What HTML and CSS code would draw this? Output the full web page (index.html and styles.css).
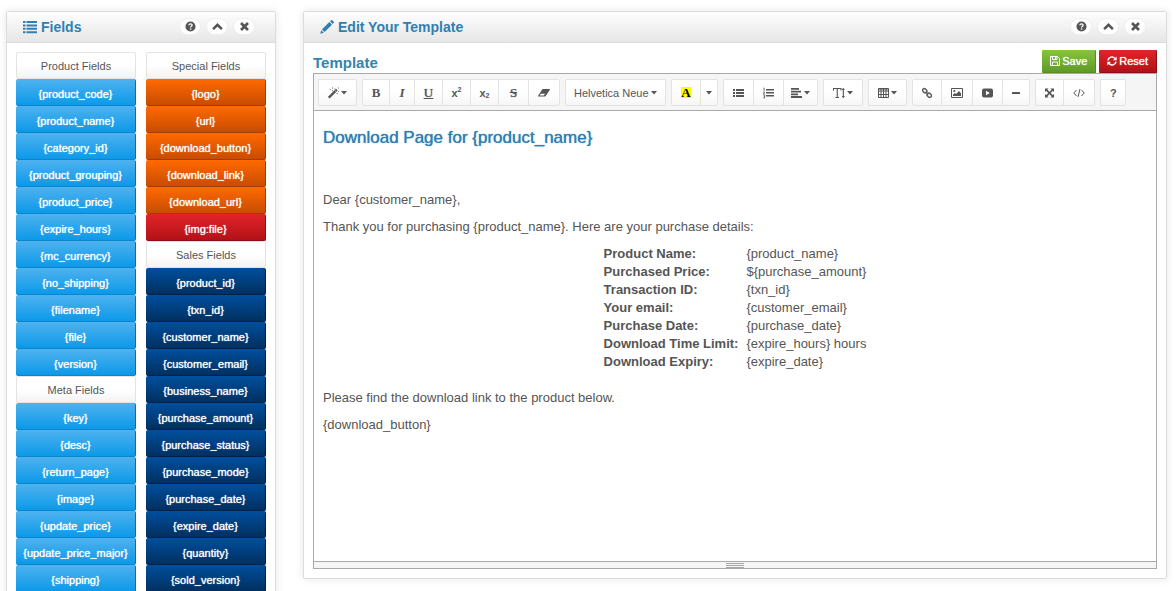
FILE: index.html
```html
<!DOCTYPE html>
<html lang="en">
<head>
<meta charset="utf-8">
<title>Edit Your Template</title>
<link rel="stylesheet" href="styles.css">
</head>
<body>
<svg class="sprite" aria-hidden="true">
  <symbol id="help" viewBox="0 0 12 12"><circle cx="6" cy="6" r="5.5" fill="currentColor"/><path d="M4.2 4.7C4.2 2.5 7.9 2.6 7.8 4.6C7.7 5.7 6.1 5.7 6.1 7" fill="none" stroke="#fff" stroke-width="1.4"/><rect x="5.3" y="8" width="1.6" height="1.5" fill="#fff"/></symbol>
  <symbol id="up" viewBox="0 0 12 12"><path d="M1.2 8.8L6 4.2l4.800 4.600" fill="none" stroke="currentColor" stroke-width="2.800"/></symbol>
  <symbol id="close" viewBox="0 0 12 12"><path d="M2.2 2.2l7.6 7.6M9.8 2.2L2.2 9.8" stroke="currentColor" stroke-width="3"/></symbol>
  <symbol id="caret" viewBox="0 0 6 4"><path d="M0 0h6L3 3.5z" fill="currentColor"/></symbol>
</svg>
<div class="page">
  <aside class="panel">
    <header class="panel-head">
      <svg class="head-icon" viewBox="0 0 14 14"><path d="M0 1h2.5v2H0zM3.500 1H14v2H3.500zM0 4.400h2.500v2H0zM3.500 4.400H14v2H3.500zM0 7.800h2.500v2H0zM3.500 7.800H14v2H3.500zM0 11.200h2.500v2H0zM3.500 11.200H14v2H3.500z" fill="currentColor"/></svg>
      <h2>Fields</h2>
      <div class="head-tools">
        <button aria-label="Help"><svg><use href="#help"/></svg></button>
        <button aria-label="Collapse"><svg><use href="#up"/></svg></button>
        <button aria-label="Close"><svg><use href="#close"/></svg></button>
      </div>
    </header>
    <div class="fields">
      <div class="field-col">
        <h3>Product Fields</h3>
        <button class="blue">{product_code}</button>
        <button class="blue">{product_name}</button>
        <button class="blue">{category_id}</button>
        <button class="blue">{product_grouping}</button>
        <button class="blue">{product_price}</button>
        <button class="blue">{expire_hours}</button>
        <button class="blue">{mc_currency}</button>
        <button class="blue">{no_shipping}</button>
        <button class="blue">{filename}</button>
        <button class="blue">{file}</button>
        <button class="blue">{version}</button>
        <h3>Meta Fields</h3>
        <button class="blue">{key}</button>
        <button class="blue">{desc}</button>
        <button class="blue">{return_page}</button>
        <button class="blue">{image}</button>
        <button class="blue">{update_price}</button>
        <button class="blue">{update_price_major}</button>
        <button class="blue">{shipping}</button>
      </div>
      <div class="field-col">
        <h3>Special Fields</h3>
        <button class="orange">{logo}</button>
        <button class="orange">{url}</button>
        <button class="orange">{download_button}</button>
        <button class="orange">{download_link}</button>
        <button class="orange">{download_url}</button>
        <button class="red">{img:file}</button>
        <h3>Sales Fields</h3>
        <button class="navy">{product_id}</button>
        <button class="navy">{txn_id}</button>
        <button class="navy">{customer_name}</button>
        <button class="navy">{customer_email}</button>
        <button class="navy">{business_name}</button>
        <button class="navy">{purchase_amount}</button>
        <button class="navy">{purchase_status}</button>
        <button class="navy">{purchase_mode}</button>
        <button class="navy">{purchase_date}</button>
        <button class="navy">{expire_date}</button>
        <button class="navy">{quantity}</button>
        <button class="navy">{sold_version}</button>
      </div>
    </div>
  </aside>

  <main class="panel editor-panel">
    <header class="panel-head">
      <svg class="head-icon" viewBox="0 0 14 14"><path d="M0.300 13.700L1.200 10.200L3.800 12.800zM1.900 9.400L9.300 2L12 4.700L4.600 12.100zM10 1.300L11.200 0.200Q11.800-0.200 12.300 0.300L13.700 1.700Q14.200 2.300 13.700 2.800L12.700 4z" fill="currentColor"/></svg>
      <h2>Edit Your Template</h2>
      <div class="head-tools">
        <button aria-label="Help"><svg><use href="#help"/></svg></button>
        <button aria-label="Collapse"><svg><use href="#up"/></svg></button>
        <button aria-label="Close"><svg><use href="#close"/></svg></button>
      </div>
    </header>
    <div class="editor-wrap">
      <div class="title-row">
        <h2>Template</h2>
        <button class="action green"><svg viewBox="0 0 10 10"><path d="M.5.5h7l2 2v7h-9zM2.500.500v3h4.500v-3M2.500 9.500v-3.500h5v3.500M5.500 1v2" fill="none" stroke="currentColor"/></svg>Save</button>
        <button class="action red"><svg viewBox="0 0 10 10"><path d="M.9 4.300A4.100 4.100 0 0 1 8 2.400M9.100 5.700A4.100 4.100 0 0 1 2 7.600" fill="none" stroke="currentColor" stroke-width="1.500"/><path d="M9.700.500v3.700H6zM.3 9.500V5.800H4z" fill="currentColor"/></svg>Reset</button>
      </div>
      <div class="editor">
        <div class="toolbar" role="toolbar" aria-label="Formatting">
          <div class="group">
            <button aria-label="Style"><svg class="i11" viewBox="0 0 12 12"><path d="M.8 11.200L8 4" stroke="currentColor" stroke-width="2.600"/><path d="M8.200 3.800L9.700 2.300" stroke="currentColor" stroke-width="2.600"/><path d="M2 1.500h1v1H2zM4.500 0h1v1h-1zM4.500 3h1v1h-1zM7 1.200h1v1H7zM11 4h1v1h-1zM9.500 6h1v1h-1zM10.800 0h1v1h-1z" fill="currentColor"/></svg><svg class="caret"><use href="#caret"/></svg></button>
          </div>
          <div class="group">
            <button aria-label="Bold"><b class="glyph w8">B</b></button>
            <button aria-label="Italic"><i class="glyph w6">I</i></button>
            <button aria-label="Underline"><u class="glyph w9">U</u></button>
            <button aria-label="Superscript"><span class="script w9">x<sup>2</sup></span></button>
            <button aria-label="Subscript"><span class="script w9">x<sub>2</sub></span></button>
            <button aria-label="Strikethrough"><s class="glyph strike w11">S</s></button>
            <button aria-label="Clear formatting"><svg class="i12" viewBox="0 0 12 12"><path d="M4.500 2H11.500Q12.200 2.200 11.700 3L7.700 9Q7.300 9.500 6.800 9.500H.5Q-.2 9.200.3 8.500z" fill="currentColor"/><path d="M1.600 8.400L2.800 6.700H7L5.900 8.400z" fill="#fff"/></svg></button>
          </div>
          <div class="group font-picker">
            <select aria-label="Font family"><option>Helvetica Neue</option><option>Arial</option><option>Georgia</option></select>
            <svg class="caret"><use href="#caret"/></svg>
          </div>
          <div class="group">
            <button aria-label="Highlight"><b class="glyph mark w10">A</b></button>
            <button class="slim" aria-label="More colours"><svg class="caret"><use href="#caret"/></svg></button>
          </div>
          <div class="group">
            <button aria-label="Bulleted list"><svg class="i11" viewBox="0 0 11 12"><path d="M0 2h2v2H0zM3 2h8v2H3zM0 5h2v2H0zM3 5h8v2H3zM0 8h2v2H0zM3 8h8v2H3z" fill="currentColor"/></svg></button>
            <button aria-label="Numbered list"><svg class="i11" viewBox="0 0 11 12"><path d="M3 2h8v1.500H3zM3 5h8v1.500H3zM3 8h8v1.500H3z" fill="currentColor"/><path d="M.3 1h.8v3M.2 5h1.400L.3 7h1.500M.2 8h1.400v3H.2M.8 9.500h.8" fill="none" stroke="currentColor" stroke-width=".8"/></svg></button>
            <button class="snug" aria-label="Paragraph"><svg class="i11" viewBox="0 0 11 12"><path d="M0 1h8v1.800H0zM0 3.700h10v1.800H0zM0 6.400h7v1.800H0zM0 9.100h11v1.800H0z" fill="currentColor"/></svg><svg class="caret"><use href="#caret"/></svg></button>
          </div>
          <div class="group">
            <button aria-label="Line height"><svg class="i12" viewBox="0 0 12 12"><path d="M.5 3.500V1.500H8V3.500M4.250 1.500V10.500M2.500 10.500H6M10.300 2.500V9.500" fill="none" stroke="currentColor" stroke-width="1.100"/><path d="M8.700 3L10.300.800L11.900 3zM8.700 9L10.300 11.200L11.900 9z" fill="currentColor"/></svg><svg class="caret"><use href="#caret"/></svg></button>
          </div>
          <div class="group">
            <button aria-label="Table"><svg class="i11" viewBox="0 0 11 12"><path d="M.5 1.500h10v9H.5zM.5 4h10M.5 7.500h10M3 2v9M5.500 2v9M8 2v9M.5 2h10" fill="none" stroke="currentColor"/></svg><svg class="caret"><use href="#caret"/></svg></button>
          </div>
          <div class="group">
            <button aria-label="Link"><svg class="i10" viewBox="0 0 10 12"><g fill="none" stroke="currentColor" stroke-width="1.400"><rect x="-2.300" y="-1.700" width="4.600" height="3.400" rx="1.500" transform="translate(2.700 3.700) rotate(45)"/><rect x="-2.300" y="-1.700" width="4.600" height="3.400" rx="1.500" transform="translate(7.300 8.300) rotate(45)"/><path d="M3.700 4.700L6.300 7.300"/></g></svg></button>
            <button aria-label="Picture"><svg class="i12" viewBox="0 0 12 12"><path d="M.5 1.500h11v9H.5z" fill="none" stroke="currentColor"/><circle cx="3.300" cy="4" r="1.100" fill="currentColor"/><path d="M2 9V7.500L3.800 6L5 7L8 4L10 6.200V9z" fill="currentColor"/></svg></button>
            <button aria-label="Video"><svg class="i11" viewBox="0 0 11 12"><rect y="1.500" width="11" height="9" rx="2" fill="currentColor"/><path d="M4 3.700V8.300L7.800 6z" fill="#fff"/></svg></button>
            <button aria-label="Horizontal rule"><svg class="i8" viewBox="0 0 8 12"><rect y="5" width="8" height="2" rx=".5" fill="currentColor"/></svg></button>
          </div>
          <div class="group">
            <button aria-label="Full screen"><svg class="i9" viewBox="0 0 10 12"><path d="M1.500 2.500L8.500 9.500M8.500 2.500L1.500 9.500" stroke="currentColor" stroke-width="1.800"/><path d="M0 1H4L0 5zM10 1V5L6 1zM0 11V7L4 11zM10 11H6L10 7z" fill="currentColor"/></svg></button>
            <button aria-label="Code view"><svg class="i12" viewBox="0 0 12 12"><path d="M3.500 3L.8 6L3.500 9M8.500 3L11.200 6L8.500 9M7 2L5 10" fill="none" stroke="currentColor"/></svg></button>
          </div>
          <div class="group">
            <button aria-label="Help"><b class="question w6">?</b></button>
          </div>
        </div>
        <div class="document" contenteditable="true" role="textbox" aria-label="Template">
          <h3>Download Page for {product_name}</h3>
          <p><br></p>
          <p>Dear {customer_name},</p>
          <p>Thank you for purchasing {product_name}. Here are your purchase details:</p>
          <table>
            <tr><th>Product Name:</th><td>{product_name}</td></tr>
            <tr><th>Purchased Price:</th><td>${purchase_amount}</td></tr>
            <tr><th>Transaction ID:</th><td>{txn_id}</td></tr>
            <tr><th>Your email:</th><td>{customer_email}</td></tr>
            <tr><th>Purchase Date:</th><td>{purchase_date}</td></tr>
            <tr><th>Download Time Limit:</th><td>{expire_hours} hours</td></tr>
            <tr><th>Download Expiry:</th><td>{expire_date}</td></tr>
          </table>
          <p>Please find the download link to the product below.</p>
          <p>{download_button}</p>
        </div>
        <div class="resize"><span></span></div>
      </div>
    </div>
  </main>
</div>
</body>
</html>
```

FILE: styles.css
```css
* { box-sizing: border-box; }
body {
  margin: 0;
  background: #fff;
  color: #555;
  font: 13px/18px "Liberation Sans", Arial, sans-serif;
}
h2, h3, p { margin: 0; }
button, select { font: inherit; color: inherit; margin: 0; cursor: pointer; }
svg { display: block; flex: none; }
.sprite { position: absolute; width: 0; height: 0; }

.page {
  display: grid;
  grid-template-columns: 270px 1fr;
  gap: 27px;
  align-items: start;
  height: 100vh;
  padding: 11px 9px 12px 6px;
  overflow: hidden;
}
.panel {
  background: #fff;
  border: 1px solid #dcdcdc;
  border-radius: 2px;
  box-shadow: 0 0 9px rgba(0, 0, 0, .1);
}
.panel-head {
  display: flex;
  align-items: center;
  height: 31px;
  padding: 0 20px 0 16px;
  border-bottom: 1px solid #dcdcdc;
  background: linear-gradient(#fefefe, #e6e6e6);
  color: #2f7fb3;
}
.head-icon { width: 14px; height: 14px; margin-right: 4px; }
.panel-head h2 { flex: 1; font-size: 14px; line-height: 18px; }
.head-tools { display: flex; gap: 5px; padding-bottom: 2px; }
.head-tools button {
  display: grid;
  place-items: center;
  width: 22px;
  height: 17px;
  padding: 0;
  border: 1px solid #eee;
  border-radius: 9px;
  background: #fff;
  color: #555;
}
.head-tools svg { width: 11px; height: 11px; }

.fields {
  display: grid;
  grid-template-columns: 1fr 1fr;
  gap: 10px;
  padding: 9px;
}
.field-col { display: flex; flex-direction: column; }
.field-col h3, .field-col button {
  height: 27px;
  padding: 0;
  border: 1px solid #e3e3e3;
  border-radius: 2px;
  font-size: 11px;
  font-weight: normal;
  line-height: 26px;
  text-align: center;
}
.field-col h3 { background: linear-gradient(#fff 50%, #f3f3f3); }
.field-col button, .action {
  border-width: 0 1px 1px 0;
  border-style: solid;
  color: #fff;
  text-shadow: 0 0 1px #fff;
}
.field-col button { padding-top: 2px; }
.field-col .blue { background: linear-gradient(#4fb2ef, #0c99e9); border-color: #0a6fa8; border-bottom-color: #0a86cd; }
.field-col .orange { background: linear-gradient(#ff6a00, #c94c00); border-color: #a33c00; }
.field-col .red, .red { background: linear-gradient(#e2242a, #b11217); border-color: #8e1014; }
.field-col .navy { background: linear-gradient(#004f9e, #003060); border-color: #002147; }
.green { background: linear-gradient(#86c440, #5f9a27); border-color: #568d22; }

.editor-panel {
  display: flex;
  flex-direction: column;
  min-height: calc(100vh - 23px);
}
.editor-wrap {
  display: flex;
  flex: 1;
  flex-direction: column;
  padding: 7px 9px 9px;
}
.title-row { display: flex; gap: 3px; }
.title-row h2 {
  flex: 1;
  align-self: end;
  color: #3385ab;
  font-size: 15px;
  line-height: 20px;
}
.action {
  display: flex;
  align-items: center;
  gap: 2px;
  height: 23px;
  padding: 0 8px;
  border-radius: 1px;
  font-size: 11px;
}
.action svg { width: 10px; height: 10px; }

.editor {
  display: flex;
  flex: 1;
  flex-direction: column;
  border: 1px solid #a9a9a9;
}
.toolbar {
  display: flex;
  flex-wrap: wrap;
  gap: 5px;
  padding: 5px 4px 4px;
  border-bottom: 1px solid #a9a9a9;
  background: #f5f5f5;
}
.group { display: flex; }
.group button, .font-picker {
  height: 27px;
  border: 1px solid #e3e3e3;
  background: linear-gradient(#fff 50%, #f6f6f6);
}
.group button {
  display: flex;
  align-items: center;
  justify-content: center;
  gap: 2px;
  padding: 0 9px;
  font-size: 11px;
}
.group button + button { margin-left: -1px; }
.group button:first-child, .font-picker { border-radius: 2px 0 0 2px; }
.group button:last-child { border-radius: 0 2px 2px 0; }
.group .slim { padding: 0 5px; }
.group .snug { padding: 0 7px; }
.caret { width: 6px; height: 4px; }
.font-picker { display: grid; align-items: center; }
.font-picker select {
  grid-area: 1 / 1;
  height: 25px;
  padding: 0 16px 0 8px;
  border: 0;
  appearance: none;
  background: none;
  font-size: 11px;
}
.font-picker .caret { grid-area: 1 / 1; justify-self: end; margin-right: 8px; pointer-events: none; }

.i8, .i9, .i10, .i11, .i12 { height: 12px; }
.w6 { width: 6px; }
.i8, .w8 { width: 8px; }
.i9, .w9 { width: 9px; }
.i10, .w10 { width: 10px; }
.i11, .w11 { width: 11px; }
.i12 { width: 12px; }
.glyph, .script { display: flex; justify-content: center; }
.glyph { font: bold 13px/13px "Liberation Serif", serif; }
i.glyph { font-style: italic; }
u.glyph { font-weight: normal; text-shadow: 0 0 1px #555; }
.strike { font-weight: normal; text-shadow: 0 0 1px #555; }
.mark { background: #ff0; color: #000; line-height: 11px; }
.script { font-weight: bold; line-height: 14px; }
.script sup, .script sub { font-size: 7px; line-height: 8px; }
.script sub { align-self: end; }

.document { flex: 1; padding: 16px 9px; outline: 0; }
.document h3 {
  margin-bottom: 15px;
  color: #2f7fb3;
  font-size: 17px;
  font-weight: normal;
  line-height: 22px;
  text-shadow: 0 0 1px #2f7fb3;
}
.document p { margin-bottom: 9px; }
.document table { margin: 0 auto 18px; border-collapse: collapse; }
.document th, .document td { padding: 0 4px; text-align: left; }

.resize {
  display: grid;
  justify-content: center;
  height: 7px;
  padding-top: 1px;
  border-top: 1px solid #a9a9a9;
  background: #f5f5f5;
}
.resize span {
  width: 18px;
  height: 5px;
  background: repeating-linear-gradient(#a9a9a9 0 1px, transparent 1px 2px);
}
```
